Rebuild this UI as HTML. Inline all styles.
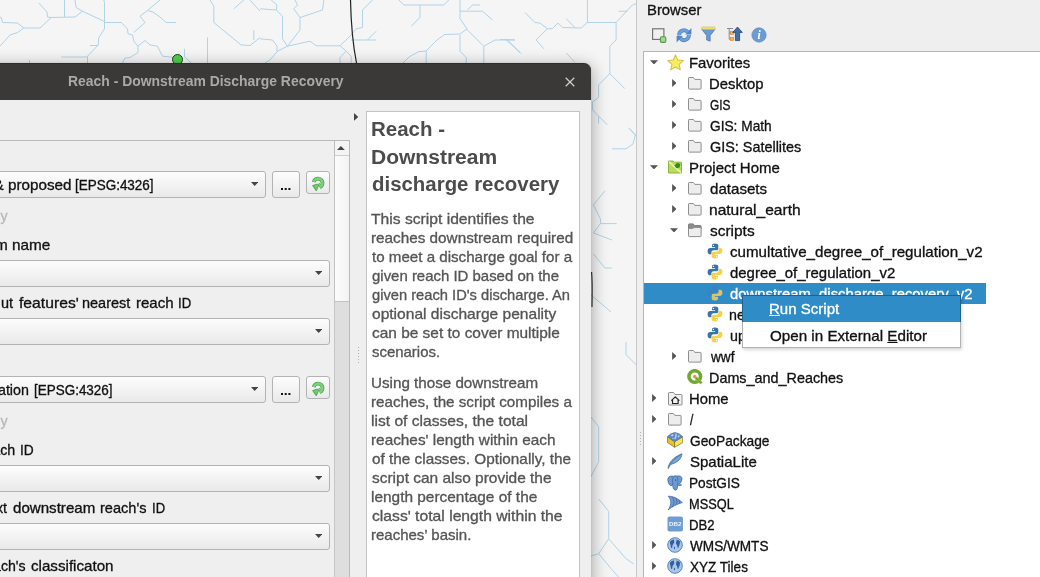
<!DOCTYPE html>
<html><head><meta charset="utf-8"><title>QGIS</title>
<style>
*{box-sizing:border-box}
html,body{margin:0;padding:0}
body{width:1040px;height:577px;overflow:hidden;position:relative;background:#f5f5f5;font-family:"Liberation Sans",sans-serif}
.layer{position:absolute;left:0;top:0;width:1040px;height:577px;overflow:hidden;will-change:transform}
.t{position:absolute;white-space:pre;line-height:20px;display:inline-block;-webkit-text-stroke:0.32px currentColor}
.abs{position:absolute}
/* dialog */
#dlg{position:absolute;left:-20px;top:63px;width:611px;height:540px;background:#efefef;border-radius:0 7px 0 0;box-shadow:0 4px 16px 2px rgba(0,0,0,.30),0 0 2px rgba(0,0,0,.14)}
#tbar{position:absolute;left:0;top:0;width:611px;height:36.5px;background:#3b3938;border-radius:0 7px 0 0;border-top:1px solid #2e2d2c}
.combo{position:absolute;height:27px;border:1px solid #b3b3b3;border-radius:3px;background:linear-gradient(#fdfdfd,#f3f3f3 50%,#e9e9e9)}
.combo svg{position:absolute;right:6.7px;top:10.2px}
.btn{position:absolute;border:1px solid #b3b3b3;border-radius:3px;background:linear-gradient(#fdfdfd,#f3f3f3 50%,#e9e9e9)}
/* browser */
#brp{position:absolute;left:636px;top:0;width:404px;height:577px;background:#efefef;border-left:1px solid #c9c9c9}
#tree{position:absolute;left:643px;top:51px;width:420px;height:540px;background:#fff;border:1px solid #b5b5b5}
#sel{position:absolute;left:644px;top:283px;width:342px;height:21px;background:#308cc6}
#menu{position:absolute;left:742px;top:295px;width:219px;height:53px;background:#fff;box-shadow:1px 2px 3px rgba(0,0,0,.16)}
#menu:after{content:"";position:absolute;left:0;top:0;right:0;bottom:0;border:1px solid rgba(0,0,0,.3)}
#menu .hi{position:absolute;left:0;top:0;width:219px;height:26.5px;background:#308cc6}
</style></head>
<body>
<!-- MAP -->
<svg class="abs" style="left:0;top:0" width="640" height="577" viewBox="0 0 640 577" fill="none" stroke="#b0d3e8" stroke-width="1">
<polyline points="38.8,3.0 47.0,12.0 47.5,17.0 51.2,17.5 75.0,17.0 82.5,11.2 76.2,7.5 75.0,0.0"/>
<polyline points="64.5,0.0 64.5,17.0"/>
<polyline points="82.5,11.2 103.8,21.2"/>
<polyline points="103.8,0.0 104.5,2.5 104.5,28.8 98.8,37.5 98.2,45.0 87.5,56.2 87.5,63.0"/>
<polyline points="61.2,57.0 87.5,57.0"/>
<polyline points="90.0,45.5 98.2,45.5"/>
<polyline points="0.0,46.2 10.0,35.0 17.5,32.5 23.8,28.0 40.0,28.0 51.2,17.5"/>
<polyline points="0.0,17.0 1.2,17.5 2.5,22.5 17.5,23.0 23.8,28.0"/>
<polyline points="104.5,22.5 121.2,22.5 127.5,28.8 128.0,33.8 132.5,35.0 133.8,41.2 138.0,46.2 138.0,52.5 130.0,57.5 125.0,58.0 122.5,63.0"/>
<polyline points="133.8,32.5 145.0,22.5 140.0,16.2 147.5,10.5 160.0,0.0"/>
<polyline points="147.5,10.5 153.0,12.0 160.0,17.0 166.2,22.5 176.2,22.5"/>
<polyline points="138.0,46.2 145.0,40.5 150.0,45.0 157.5,46.2 162.5,56.2 175.0,57.5"/>
<polyline points="184.5,48.8 184.5,57.0 191.2,63.0"/>
<polyline points="207.5,37.5 207.5,63.0"/>
<polyline points="210.0,0.0 213.8,6.2 213.8,22.5 241.2,45.0 250.0,45.5 260.0,37.5"/>
<polyline points="253.8,30.0 253.8,40.0"/>
<polyline points="233.8,8.8 243.8,0.0"/>
<polyline points="250.0,0.0 260.0,11.2"/>
<polyline points="29.5,60.0 29.5,63.0"/>
<polyline points="260.0,8.8 276.2,10.0 277.0,5.0 271.2,0.0"/>
<polyline points="276.2,10.0 282.5,16.2 282.5,38.8 287.5,46.2 277.5,51.2 270.0,60.0 265.0,63.0"/>
<polyline points="260.0,38.8 272.5,40.0 277.0,46.2 277.0,51.2"/>
<polyline points="287.5,46.2 300.0,30.0 300.0,17.5 293.8,8.8 297.5,5.0 295.0,0.0"/>
<polyline points="300.0,17.5 322.5,10.0 323.8,0.0"/>
<polyline points="287.5,46.2 310.0,41.2 316.2,45.8 340.0,45.8 351.2,35.0 356.2,28.8 362.5,27.5 362.5,10.0 372.5,0.0"/>
<polyline points="340.0,45.8 346.2,51.2 351.2,56.2 351.2,63.0"/>
<polyline points="346.2,51.2 340.0,57.5 340.0,63.0"/>
<polyline points="351.2,40.0 376.2,40.0"/>
<polyline points="367.5,40.0 376.2,31.2"/>
<polyline points="398.8,0.0 403.8,5.0 443.8,5.0 448.8,0.0"/>
<polyline points="420.0,5.0 420.0,17.5 411.2,26.2"/>
<polyline points="460.0,0.0 460.0,18.5 467.0,29.0 460.0,34.0 444.6,34.5 437.0,40.0 426.0,51.0 418.5,51.7 409.0,57.0 403.0,63.0"/>
<polyline points="426.2,51.2 426.2,63.0"/>
<polyline points="460.0,35.0 460.0,51.2 466.2,57.5 466.2,63.0"/>
<polyline points="460.0,11.2 482.5,11.2 492.5,20.0"/>
<polyline points="467.5,10.0 472.5,5.0 480.0,5.0"/>
<polyline points="466.2,28.8 483.8,46.2 483.8,63.0"/>
<polyline points="483.8,46.2 495.0,40.0 515.0,40.0"/>
<polyline points="506.2,40.0 520.0,52.5"/>
<polyline points="587.4,0.0 587.4,22.5 616.1,22.5 616.1,39.9 609.8,46.2 609.8,73.6 598.6,84.9 598.6,97.4 592.4,102.3 592.4,109.8 598.6,116.1 598.6,123.6"/>
<polyline points="616.1,22.5 632.3,5.0 636.0,3.7"/>
<polyline points="618.6,11.2 627.3,11.2"/>
<polyline points="525.0,12.5 534.9,22.5 539.9,23.0 547.4,28.7 552.4,28.7 557.9,23.0 562.4,27.5 581.1,28.0 587.4,22.5"/>
<polyline points="566.2,18.7 574.9,27.5"/>
<polyline points="547.4,28.7 536.2,39.9 543.7,48.7"/>
<polyline points="500.0,39.4 515.0,39.9"/>
<polyline points="507.5,39.9 521.2,53.7"/>
<polyline points="566.2,52.9 574.9,62.4"/>
<polyline points="609.8,73.6 624.8,88.6"/>
<polyline points="598.6,116.1 607.3,124.8"/>
<polyline points="629.8,128.6 636.0,136.0"/>
<polyline points="628.4,127.8 635.4,134.8 633.0,144.0 626.0,148.8 612.0,148.8"/>
<polyline points="605.0,190.8 593.4,204.9 600.4,218.9 600.4,223.6 616.7,223.6"/>
<polyline points="600.4,223.6 593.4,233.0 612.0,240.0"/>
<polyline points="593.4,253.9 605.0,268.0 612.0,268.0"/>
<polyline points="591.0,295.0 611.0,312.0"/>
<polyline points="626.0,342.0 626.0,354.7 636.0,364.6"/>
<polyline points="591.0,417.0 598.7,426.8 598.7,461.6 591.0,476.6"/>
<polyline points="598.7,499.0 608.7,511.4 608.7,538.8 598.7,553.7 591.0,556.0"/>
<polyline points="608.7,538.8 626.0,558.7 633.5,563.7"/>
<polyline points="598.7,553.7 611.0,568.6 618.6,577.0"/>
<path d="M350.5 0 C351 25 352 40 356.5 63" stroke="#222" stroke-width="1.2"/>
<path d="M591.6 272 C592.6 284 592 296 592 307" stroke="#222" stroke-width="1.1"/>

</svg>
<div class="abs" style="left:171.5px;top:54px;width:11px;height:11px;border-radius:50%;background:#4fd04a;border:1px solid #1f3f1f"></div>

<!-- DIALOG -->
<div id="dlg"><div id="tbar"></div></div>
<div class="layer" id="dlglayer">
  <!-- close x -->
  <svg class="abs" style="left:564px;top:76px" width="12" height="12" viewBox="0 0 12 12"><path d="M1.7 1.7 L10.3 10.3 M10.3 1.7 L1.7 10.3" stroke="#cdcdcd" stroke-width="1.25" fill="none"/></svg>
  <!-- scroll area frame -->
  <div class="abs" style="left:-5px;top:140px;width:355px;height:460px;border:1px solid #b9b9b9;background:#efefef"></div>
  <!-- scrollbar -->
  <div class="abs" style="left:334px;top:141px;width:15px;height:440px;background:#dedede;border-left:1px solid #c6c6c6"></div>
  <div class="abs" style="left:334px;top:141px;width:15px;height:15px;background:#f4f4f4;border-left:1px solid #bdbdbd;border-bottom:1px solid #cdcdcd"></div>
  <svg class="abs" style="left:337.3px;top:146.2px" width="7.8" height="4"><path d="M0 4 L3.9 0 L7.8 4 Z" fill="#444"/></svg>
  <div class="abs" style="left:334px;top:156px;width:15px;height:146px;background:linear-gradient(90deg,#fcfcfc,#f3f3f3);border:1px solid #c2c2c2;border-right:none;border-top:none"></div>
  <!-- widgets -->
  <div class="combo" style="left:-10px;top:171px;width:276px"><svg width="7.4" height="4"><path d="M0 0 H7.4 L3.7 4 Z" fill="#444"/></svg></div>
  <div class="btn" style="left:272px;top:171px;width:28px;height:27px"></div>
  <div class="abs" style="left:281.3px;top:187.6px;width:2px;height:2px;background:#111;box-shadow:3.7px 0 0 #111,7.4px 0 0 #111"></div>
  <div class="btn" style="left:306px;top:171px;width:24px;height:23px"></div>
  <svg class="abs gi" style="left:310px;top:175px" width="16" height="16" viewBox="0 0 16 16"><use href="#refresh"/></svg>
  <div class="combo" style="left:-10px;top:260px;width:340px"><svg width="7.4" height="4"><path d="M0 0 H7.4 L3.7 4 Z" fill="#444"/></svg></div>
  <div class="combo" style="left:-10px;top:318px;width:340px"><svg width="7.4" height="4"><path d="M0 0 H7.4 L3.7 4 Z" fill="#444"/></svg></div>
  <div class="combo" style="left:-10px;top:376px;width:276px"><svg width="7.4" height="4"><path d="M0 0 H7.4 L3.7 4 Z" fill="#444"/></svg></div>
  <div class="btn" style="left:272px;top:376px;width:28px;height:27px"></div>
  <div class="abs" style="left:281.3px;top:392.6px;width:2px;height:2px;background:#111;box-shadow:3.7px 0 0 #111,7.4px 0 0 #111"></div>
  <div class="btn" style="left:306px;top:376px;width:24px;height:23px"></div>
  <svg class="abs gi" style="left:310px;top:380px" width="16" height="16" viewBox="0 0 16 16"><use href="#refresh"/></svg>
  <div class="combo" style="left:-10px;top:465px;width:340px"><svg width="7.4" height="4"><path d="M0 0 H7.4 L3.7 4 Z" fill="#444"/></svg></div>
  <div class="combo" style="left:-10px;top:523px;width:340px"><svg width="7.4" height="4"><path d="M0 0 H7.4 L3.7 4 Z" fill="#444"/></svg></div>
  <!-- splitter -->
  <svg class="abs" style="left:354px;top:113.3px" width="4.4" height="7.8"><path d="M0 0 L4.3 3.9 L0 7.8 Z" fill="#444"/></svg>
  <div class="abs" style="left:357.5px;top:347px;width:1px;height:18px;background:repeating-linear-gradient(#b0b0b0 0 1px,transparent 1px 3px)"></div>
  <!-- help -->
  <div class="abs" style="left:366px;top:111px;width:214px;height:480px;background:#fff;border:1px solid #c3c3c3"></div>
<span class="t" style="left:67.60px;transform-origin:0 0;top:73px;line-height:16px;font-size:14.6px;font-weight:700;color:#a9a9a9;transform:scaleX(0.9543);-webkit-text-stroke:0">Reach - Downstream Discharge Recovery</span>
<span class="t" style="right:968.95px;transform-origin:100% 0;top:176px;line-height:17px;font-size:15px;font-weight:400;color:#111;transform:scaleX(1.0160)">ts &amp; proposed</span>
<span class="t" style="left:75.36px;transform-origin:0 0;top:177px;line-height:16px;font-size:14.4px;font-weight:400;color:#111;transform:scaleX(0.9354)">[EPSG:4326]</span>
<span class="t" style="right:1032.17px;transform-origin:100% 0;top:207px;line-height:17px;font-size:15px;font-weight:400;color:#b8b8b8;transform:scaleX(0.9500)">only</span>
<span class="t" style="right:989.65px;transform-origin:100% 0;top:236px;line-height:17px;font-size:15px;font-weight:400;color:#111;transform:scaleX(1.0227)">Dam name</span>
<span class="t" style="left:1.00px;transform-origin:0 0;top:294px;line-height:17px;font-size:15px;font-weight:400;color:#111;transform:scaleX(0.9669)">ut</span>
<span class="t" style="left:19.40px;transform-origin:0 0;top:294px;line-height:17px;font-size:15px;font-weight:400;color:#111;transform:scaleX(1.0472)">features'</span>
<span class="t" style="left:81.84px;transform-origin:0 0;top:294px;line-height:17px;font-size:15px;font-weight:400;color:#111;transform:scaleX(0.9646)">nearest</span>
<span class="t" style="left:135.60px;transform-origin:0 0;top:294px;line-height:17px;font-size:15px;font-weight:400;color:#111;transform:scaleX(1.0006)">reach</span>
<span class="t" style="left:177.98px;transform-origin:0 0;top:295px;line-height:16px;font-size:14.4px;font-weight:400;color:#111;transform:scaleX(0.9155)">ID</span>
<span class="t" style="right:1010.67px;transform-origin:100% 0;top:381px;line-height:17px;font-size:15px;font-weight:400;color:#111;transform:scaleX(0.9500)">regulation</span>
<span class="t" style="left:33.86px;transform-origin:0 0;top:382px;line-height:16px;font-size:14.4px;font-weight:400;color:#111;transform:scaleX(0.9354)">[EPSG:4326]</span>
<span class="t" style="right:1032.17px;transform-origin:100% 0;top:412px;line-height:17px;font-size:15px;font-weight:400;color:#b8b8b8;transform:scaleX(0.9500)">only</span>
<span class="t" style="right:1024.38px;transform-origin:100% 0;top:441px;line-height:17px;font-size:15px;font-weight:400;color:#111;transform:scaleX(0.9484)">ach</span>
<span class="t" style="left:20.15px;transform-origin:0 0;top:442px;line-height:16px;font-size:14.4px;font-weight:400;color:#111;transform:scaleX(0.9540)">ID</span>
<span class="t" style="right:1032.99px;transform-origin:100% 0;top:499px;line-height:17px;font-size:15px;font-weight:400;color:#111;transform:scaleX(0.9500)">ext</span>
<span class="t" style="left:13.00px;transform-origin:0 0;top:499px;line-height:17px;font-size:15px;font-weight:400;color:#111;transform:scaleX(1.0073)">downstream</span>
<span class="t" style="left:100.23px;transform-origin:0 0;top:499px;line-height:17px;font-size:15px;font-weight:400;color:#111;transform:scaleX(0.9701)">reach's</span>
<span class="t" style="left:151.69px;transform-origin:0 0;top:500px;line-height:16px;font-size:14.4px;font-weight:400;color:#111;transform:scaleX(0.9078)">ID</span>
<span class="t" style="right:1014.43px;transform-origin:100% 0;top:557px;line-height:17px;font-size:15px;font-weight:400;color:#111;transform:scaleX(0.9414)">ach's</span>
<span class="t" style="left:31.10px;transform-origin:0 0;top:557px;line-height:17px;font-size:15px;font-weight:400;color:#111;transform:scaleX(1.0103)">classificaton</span>
<span class="t" style="left:370.75px;transform-origin:0 0;top:118px;line-height:22px;font-size:19.6px;font-weight:700;color:#4c4c4c;transform:scaleX(1.0454);-webkit-text-stroke:0">Reach -</span>
<span class="t" style="left:370.73px;transform-origin:0 0;top:146px;line-height:22px;font-size:19.6px;font-weight:700;color:#4c4c4c;transform:scaleX(1.0726);-webkit-text-stroke:0">Downstream</span>
<span class="t" style="left:371.80px;transform-origin:0 0;top:173px;line-height:22px;font-size:19.6px;font-weight:700;color:#4c4c4c;transform:scaleX(1.0422);-webkit-text-stroke:0">discharge recovery</span>
<span class="t" style="left:371.10px;transform-origin:0 0;top:210px;line-height:17px;font-size:15px;font-weight:400;color:#555;transform:scaleX(1.0436)">This script identifies the</span>
<span class="t" style="left:370.78px;transform-origin:0 0;top:229px;line-height:17px;font-size:15px;font-weight:400;color:#555;transform:scaleX(1.0188)">reaches downstream required</span>
<span class="t" style="left:371.80px;transform-origin:0 0;top:248px;line-height:17px;font-size:15px;font-weight:400;color:#555;transform:scaleX(1.0085)">to meet a discharge goal for a</span>
<span class="t" style="left:371.80px;transform-origin:0 0;top:267px;line-height:17px;font-size:15px;font-weight:400;color:#555;transform:scaleX(0.9964)">given reach ID based on the</span>
<span class="t" style="left:371.80px;transform-origin:0 0;top:286px;line-height:17px;font-size:15px;font-weight:400;color:#555;transform:scaleX(0.9796)">given reach ID's discharge. An</span>
<span class="t" style="left:371.80px;transform-origin:0 0;top:305px;line-height:17px;font-size:15px;font-weight:400;color:#555;transform:scaleX(1.0369)">optional discharge penality</span>
<span class="t" style="left:371.80px;transform-origin:0 0;top:324px;line-height:17px;font-size:15px;font-weight:400;color:#555;transform:scaleX(1.0288)">can be set to cover multiple</span>
<span class="t" style="left:371.80px;transform-origin:0 0;top:343px;line-height:17px;font-size:15px;font-weight:400;color:#555;transform:scaleX(0.9956)">scenarios.</span>
<span class="t" style="left:370.89px;transform-origin:0 0;top:374px;line-height:17px;font-size:15px;font-weight:400;color:#555;transform:scaleX(1.0123)">Using those downstream</span>
<span class="t" style="left:370.89px;transform-origin:0 0;top:393px;line-height:17px;font-size:15px;font-weight:400;color:#555;transform:scaleX(1.0122)">reaches, the script compiles a</span>
<span class="t" style="left:370.86px;transform-origin:0 0;top:412px;line-height:17px;font-size:15px;font-weight:400;color:#555;transform:scaleX(1.0410)">list of classes, the total</span>
<span class="t" style="left:370.88px;transform-origin:0 0;top:431px;line-height:17px;font-size:15px;font-weight:400;color:#555;transform:scaleX(1.0227)">reaches' length within each</span>
<span class="t" style="left:371.90px;transform-origin:0 0;top:450px;line-height:17px;font-size:15px;font-weight:400;color:#555;transform:scaleX(1.0217)">of the classes. Optionally, the</span>
<span class="t" style="left:371.90px;transform-origin:0 0;top:469px;line-height:17px;font-size:15px;font-weight:400;color:#555;transform:scaleX(1.0304)">script can also provide the</span>
<span class="t" style="left:370.87px;transform-origin:0 0;top:488px;line-height:17px;font-size:15px;font-weight:400;color:#555;transform:scaleX(1.0277)">length percentage of the</span>
<span class="t" style="left:371.90px;transform-origin:0 0;top:507px;line-height:17px;font-size:15px;font-weight:400;color:#555;transform:scaleX(1.0463)">class' total length within the</span>
<span class="t" style="left:370.90px;transform-origin:0 0;top:526px;line-height:17px;font-size:15px;font-weight:400;color:#555;transform:scaleX(0.9998)">reaches’ basin.</span>

</div>

<!-- BROWSER PANEL -->
<div id="brp"></div>
<div class="abs" style="left:639.5px;top:432px;width:1px;height:14px;background:repeating-linear-gradient(#b0b0b0 0 1px,transparent 1px 3px)"></div>
<div id="tree"></div>
<div id="sel"></div>
<div class="layer" id="brlayer">

<svg class="abs" style="left:650px;top:26px" width="18" height="18" viewBox="0 0 18 18"><rect x="2.6" y="2.8" width="11.3" height="10.6" fill="none" stroke="#6b6b6b" stroke-width="1.1"/><rect x="10.4" y="10.8" width="5.4" height="5.6" rx="1.4" fill="#a3d694" stroke="#56964a" stroke-width="1.1"/></svg>
<svg class="abs" style="left:676px;top:26.6px" width="16" height="16.4" viewBox="0 0 16 16.4"><path d="M3.10 8.37 A4.9 4.9 0 0 1 11.75 5.05" fill="none" stroke="#4f86c6" stroke-width="3.9"/><path d="M12.90 8.03 A4.9 4.9 0 0 1 4.25 11.35" fill="none" stroke="#4f86c6" stroke-width="3.9"/><path d="M9.2 7.4 L15.4 7.4 L15.4 1 Z" fill="#4f86c6"/><path d="M6.8 9 L0.6 9 L0.6 15.4 Z" fill="#4f86c6"/><path d="M3.10 8.37 A4.9 4.9 0 0 1 11.75 5.05" fill="none" stroke="#6fa2dc" stroke-width="2.2"/><path d="M12.90 8.03 A4.9 4.9 0 0 1 4.25 11.35" fill="none" stroke="#6fa2dc" stroke-width="2.2"/></svg>
<svg class="abs" style="left:701.3px;top:26.4px" width="14.8" height="16.2" viewBox="0 0 16 17" preserveAspectRatio="none"><path d="M0.8 3.4 H15.2 L9.9 10 V16 L6.1 14.6 V10 Z" fill="#6a9ad2" stroke="#4676ae" stroke-width=".8" stroke-linejoin="round"/><rect x="0.8" y="1" width="14.4" height="2.6" rx=".6" fill="#f3e36a" stroke="#cbb64a" stroke-width=".6"/></svg>
<svg class="abs" style="left:726px;top:26px" width="17" height="16" viewBox="0 0 17 16"><path d="M1 2.5 H7 M3.2 2.5 V13.2 M3.2 7 H5 M3.2 13.2 H5" stroke="#8a8a8a" stroke-width="1" fill="none"/><rect x="4.6" y="5.3" width="3" height="3" fill="#f6b55a" stroke="#d98a2a" stroke-width=".7"/><rect x="4.6" y="11.4" width="3" height="3" fill="#f6b55a" stroke="#d98a2a" stroke-width=".7"/><path d="M11.5 1 L16.3 6.4 H13.6 V14.6 H9.4 V6.4 H6.7 Z" fill="#3d6ea8" stroke="#27426a" stroke-width=".8" stroke-linejoin="round"/></svg>
<svg class="abs" style="left:751px;top:27px" width="16" height="16" viewBox="0 0 16 16"><circle cx="8" cy="8" r="7.2" fill="#6d9bd1" stroke="#5585bf" stroke-width=".6"/><text x="8.1" y="12.2" font-family="Liberation Serif, serif" font-size="11.5" font-style="italic" font-weight="700" fill="#fff" text-anchor="middle">i</text></svg>
<svg class="abs" style="left:650.3px;top:60.2px" width="8" height="4.3"><use href="#a-down"/></svg>
<svg class="abs" style="left:666.5px;top:53.6px" width="17" height="17"><use href="#i-star"/></svg>
<svg class="abs" style="left:672.2px;top:79.3px" width="4.3" height="8"><use href="#a-right"/></svg>
<svg class="abs" style="left:687.0px;top:76.0px" width="16" height="16"><use href="#i-folder"/></svg>
<svg class="abs" style="left:672.2px;top:100.3px" width="4.3" height="8"><use href="#a-right"/></svg>
<svg class="abs" style="left:687.0px;top:97.0px" width="16" height="16"><use href="#i-folder"/></svg>
<svg class="abs" style="left:672.2px;top:121.3px" width="4.3" height="8"><use href="#a-right"/></svg>
<svg class="abs" style="left:687.0px;top:118.0px" width="16" height="16"><use href="#i-folder"/></svg>
<svg class="abs" style="left:672.2px;top:142.3px" width="4.3" height="8"><use href="#a-right"/></svg>
<svg class="abs" style="left:687.0px;top:139.0px" width="16" height="16"><use href="#i-folder"/></svg>
<svg class="abs" style="left:672.2px;top:184.3px" width="4.3" height="8"><use href="#a-right"/></svg>
<svg class="abs" style="left:687.0px;top:181.0px" width="16" height="16"><use href="#i-folder"/></svg>
<svg class="abs" style="left:672.2px;top:205.3px" width="4.3" height="8"><use href="#a-right"/></svg>
<svg class="abs" style="left:687.0px;top:202.0px" width="16" height="16"><use href="#i-folder"/></svg>
<svg class="abs" style="left:672.2px;top:352.3px" width="4.3" height="8"><use href="#a-right"/></svg>
<svg class="abs" style="left:687.0px;top:349.0px" width="16" height="16"><use href="#i-folder"/></svg>
<svg class="abs" style="left:650.3px;top:165.2px" width="8" height="4.3"><use href="#a-down"/></svg>
<svg class="abs" style="left:667.0px;top:159.3px" width="16" height="16"><use href="#i-project"/></svg>
<svg class="abs" style="left:670.2px;top:228.2px" width="8" height="4.3"><use href="#a-down"/></svg>
<svg class="abs" style="left:687.0px;top:221.6px" width="16" height="16"><use href="#i-folder-open"/></svg>
<svg class="abs" style="left:706.6px;top:242.8px" width="16" height="16"><use href="#i-python"/></svg>
<svg class="abs" style="left:706.6px;top:263.8px" width="16" height="16"><use href="#i-python"/></svg>
<svg class="abs" style="left:706.6px;top:305.8px" width="16" height="16"><use href="#i-python"/></svg>
<svg class="abs" style="left:706.6px;top:326.8px" width="16" height="16"><use href="#i-python"/></svg>
<svg class="abs" style="left:706.6px;top:284.8px" width="16" height="16"><use href="#i-python-sel"/></svg>
<svg class="abs" style="left:687.2px;top:369.0px" width="16" height="16"><use href="#i-qgis"/></svg>
<svg class="abs" style="left:652.3px;top:394.3px" width="4.3" height="8"><use href="#a-right"/></svg>
<svg class="abs" style="left:667.0px;top:390.5px" width="16" height="16"><use href="#i-home"/></svg>
<svg class="abs" style="left:652.3px;top:415.3px" width="4.3" height="8"><use href="#a-right"/></svg>
<svg class="abs" style="left:667.0px;top:412.0px" width="16" height="16"><use href="#i-folder"/></svg>
<svg class="abs" style="left:667.0px;top:432.0px" width="16" height="16"><use href="#i-gpkg"/></svg>
<svg class="abs" style="left:652.3px;top:457.3px" width="4.3" height="8"><use href="#a-right"/></svg>
<svg class="abs" style="left:667.0px;top:452.5px" width="16" height="16"><use href="#i-spatialite"/></svg>
<svg class="abs" style="left:667.0px;top:474.5px" width="16" height="16"><use href="#i-postgis"/></svg>
<svg class="abs" style="left:667.0px;top:494.5px" width="16" height="16"><use href="#i-mssql"/></svg>
<svg class="abs" style="left:667.0px;top:515.8px" width="16" height="16"><use href="#i-db2"/></svg>
<svg class="abs" style="left:652.3px;top:541.3px" width="4.3" height="8"><use href="#a-right"/></svg>
<svg class="abs" style="left:667.0px;top:537.0px" width="16" height="16"><use href="#i-globe"/></svg>
<svg class="abs" style="left:652.3px;top:562.3px" width="4.3" height="8"><use href="#a-right"/></svg>
<svg class="abs" style="left:667.0px;top:558.0px" width="16" height="16"><use href="#i-globe"/></svg>

<span class="t" style="left:646.91px;transform-origin:0 0;top:1px;line-height:17px;font-size:15px;font-weight:400;color:#111;transform:scaleX(0.9904)">Browser</span>
<span class="t" style="left:688.81px;transform-origin:0 0;top:54px;line-height:17px;font-size:15px;font-weight:400;color:#111;transform:scaleX(0.9919)">Favorites</span>
<span class="t" style="left:709.21px;transform-origin:0 0;top:75px;line-height:17px;font-size:15px;font-weight:400;color:#111;transform:scaleX(0.9891)">Desktop</span>
<span class="t" style="left:710.20px;transform-origin:0 0;top:97px;line-height:16px;font-size:14.4px;font-weight:400;color:#111;transform:scaleX(0.8267)">GIS</span>
<span class="t" style="left:710.20px;transform-origin:0 0;top:117px;line-height:17px;font-size:15px;font-weight:400;color:#111;transform:scaleX(0.9140)">GIS: Math</span>
<span class="t" style="left:710.20px;transform-origin:0 0;top:138px;line-height:17px;font-size:15px;font-weight:400;color:#111;transform:scaleX(0.9604)">GIS: Satellites</span>
<span class="t" style="left:688.80px;transform-origin:0 0;top:159px;line-height:17px;font-size:15px;font-weight:400;color:#111;transform:scaleX(0.9998)">Project Home</span>
<span class="t" style="left:710.20px;transform-origin:0 0;top:180px;line-height:17px;font-size:15px;font-weight:400;color:#111;transform:scaleX(1.0070)">datasets</span>
<span class="t" style="left:709.16px;transform-origin:0 0;top:201px;line-height:17px;font-size:15px;font-weight:400;color:#111;transform:scaleX(1.0361)">natural_earth</span>
<span class="t" style="left:709.60px;transform-origin:0 0;top:222px;line-height:17px;font-size:15px;font-weight:400;color:#111;transform:scaleX(1.0295)">scripts</span>
<span class="t" style="left:729.80px;transform-origin:0 0;top:243px;line-height:17px;font-size:15px;font-weight:400;color:#111;transform:scaleX(1.0095)">cumultative_degree_of_regulation_v2</span>
<span class="t" style="left:729.80px;transform-origin:0 0;top:264px;line-height:17px;font-size:15px;font-weight:400;color:#111;transform:scaleX(0.9956)">degree_of_regulation_v2</span>
<span class="t" style="left:729.80px;transform-origin:0 0;top:285px;line-height:17px;font-size:15px;font-weight:400;color:#fff;transform:scaleX(0.9894)">downstream_discharge_recovery_v2</span>
<span class="t" style="left:728.85px;transform-origin:0 0;top:306px;line-height:17px;font-size:15px;font-weight:400;color:#111;transform:scaleX(0.9500)">nearest_reach</span>
<span class="t" style="left:729.80px;transform-origin:0 0;top:327px;line-height:17px;font-size:15px;font-weight:400;color:#111;transform:scaleX(0.9500)">upstream</span>
<span class="t" style="left:711.11px;transform-origin:0 0;top:348px;line-height:17px;font-size:15px;font-weight:400;color:#111;transform:scaleX(0.9109)">wwf</span>
<span class="t" style="left:709.24px;transform-origin:0 0;top:369px;line-height:17px;font-size:15px;font-weight:400;color:#111;transform:scaleX(0.9583)">Dams_and_Reaches</span>
<span class="t" style="left:688.81px;transform-origin:0 0;top:390px;line-height:17px;font-size:15px;font-weight:400;color:#111;transform:scaleX(0.9878)">Home</span>
<span class="t" style="left:690.00px;transform-origin:0 0;top:411px;line-height:17px;font-size:15px;font-weight:400;color:#111;transform:scaleX(0.8000)">/</span>
<span class="t" style="left:689.80px;transform-origin:0 0;top:432px;line-height:17px;font-size:15px;font-weight:400;color:#111;transform:scaleX(0.9168)">GeoPackage</span>
<span class="t" style="left:689.80px;transform-origin:0 0;top:453px;line-height:17px;font-size:15px;font-weight:400;color:#111;transform:scaleX(1.0004)">SpatiaLite</span>
<span class="t" style="left:688.89px;transform-origin:0 0;top:474px;line-height:17px;font-size:15px;font-weight:400;color:#111;transform:scaleX(0.9116)">PostGIS</span>
<span class="t" style="left:688.91px;transform-origin:0 0;top:496px;line-height:16px;font-size:14.4px;font-weight:400;color:#111;transform:scaleX(0.8891)">MSSQL</span>
<span class="t" style="left:688.88px;transform-origin:0 0;top:517px;line-height:16px;font-size:14.4px;font-weight:400;color:#111;transform:scaleX(0.9151)">DB2</span>
<span class="t" style="left:689.80px;transform-origin:0 0;top:538px;line-height:16px;font-size:14.4px;font-weight:400;color:#111;transform:scaleX(0.9439)">WMS/WMTS</span>
<span class="t" style="left:689.80px;transform-origin:0 0;top:558px;line-height:17px;font-size:15px;font-weight:400;color:#111;transform:scaleX(0.9022)">XYZ Tiles</span>

</div>
<div id="menu"><div class="hi"></div></div>
<div class="layer">
<span class="t" style="left:769.00px;transform-origin:0 0;top:300px;line-height:17px;font-size:15px;font-weight:400;color:#fff;transform:scaleX(1.0020)"><u>R</u>un Script</span>
<span class="t" style="left:770.00px;transform-origin:0 0;top:327px;line-height:17px;font-size:15px;font-weight:400;color:#111;transform:scaleX(1.0123)">Open in External <u>E</u>ditor</span>

</div>
<svg width="0" height="0" style="position:absolute">
<defs>
<g id="refresh"><path d="M3.80 7.09 A4.4 4.4 0 1 1 9.60 12.13" fill="none" stroke="#46a046" stroke-width="3.7"/><path d="M2.6 10.6 L9.6 8.3 L6.3 15.9 Z" fill="#5fbf5f" stroke="#46a046" stroke-width=".8" stroke-linejoin="round"/><path d="M3.80 7.09 A4.4 4.4 0 1 1 9.60 12.13" fill="none" stroke="#7ed27e" stroke-width="2.5"/><path d="M4.2 10.7 L8.6 9.3 L6.4 14.2 Z" fill="#74cc74"/><path d="M7.2 7.6 L9.4 7.9 L7.6 9.3 Z" fill="#f4fbf4"/></g>

<symbol id="i-folder" viewBox="0 0 16 16"><path d="M1.5 2.2 Q1.5 1.5 2.2 1.5 H6 Q6.7 1.5 7.1 2.2 L7.8 3.4 H13.4 Q14.1 3.4 14.1 4.1 V12.4 Q14.1 13.1 13.4 13.1 H2.2 Q1.5 13.1 1.5 12.4 Z" fill="#ededed" stroke="#8e8e8e" stroke-width="1"/></symbol>
<symbol id="i-folder-open" viewBox="0 0 16 16"><path d="M1.5 2.6 Q1.5 1.9 2.2 1.9 H6.2 L7.6 3.6 H13.4 Q14.1 3.6 14.1 4.3 V7 H1.5 Z" fill="#8c8c8c" stroke="#7d7d7d" stroke-width="1"/><path d="M1.5 6.4 H5.8 L7 5.5 H14.1 V13.9 Q14.1 14.6 13.4 14.6 H2.2 Q1.5 14.6 1.5 13.9 Z" fill="#ededed" stroke="#8e8e8e" stroke-width="1"/></symbol>
<symbol id="i-star" viewBox="0 0 16 16"><path d="M8 0.9 L10.1 5.7 L15.3 6.2 L11.4 9.7 L12.5 14.9 L8 12.2 L3.5 14.9 L4.6 9.7 L0.7 6.2 L5.9 5.7 Z" fill="#f7ee5e" stroke="#d9bd4a" stroke-width="1" stroke-linejoin="round"/></symbol>
<symbol id="i-project" viewBox="0 0 16 16"><path d="M1.5 2 H6 L7.2 3.2 H14.5 V14 H1.5 Z" fill="#b9dc5c" stroke="#8db341" stroke-width="1"/><path d="M2 2.8 L14 13.6" stroke="#e4f3b0" stroke-width="1.6"/><path d="M10.3 3.8 L13.4 5 L12.6 8.6 L9.4 9.2 L7.4 6.4 Z" fill="#2c8f1c"/></symbol>
<symbol id="i-python" viewBox="0 0 16 16"><path d="M7.8 0.6 C5.3 0.6 5 1.7 5 2.6 V4.3 H8.1 V5 H3.2 C1.6 5 0.6 6.2 0.6 8.2 C0.6 10.2 1.5 11.3 3 11.3 H4.4 V9.4 C4.4 8 5.5 7.2 6.7 7.2 H9.6 C10.6 7.2 11.3 6.4 11.3 5.4 V2.6 C11.3 1.4 10.2 0.6 7.8 0.6 Z" fill="#3774a7"/><circle cx="6.4" cy="2.4" r="0.7" fill="#fff"/><path d="M8.2 15.4 C10.7 15.4 11 14.3 11 13.4 V11.7 H7.9 V11 H12.8 C14.4 11 15.4 9.8 15.4 7.8 C15.4 5.8 14.5 4.7 13 4.7 H11.6 V6.6 C11.6 8 10.5 8.8 9.3 8.8 H6.4 C5.4 8.8 4.7 9.6 4.7 10.6 V13.4 C4.7 14.6 5.8 15.4 8.2 15.4 Z" fill="#f8d04a"/><circle cx="9.6" cy="13.6" r="0.7" fill="#fff"/></symbol>
<symbol id="i-python-sel" viewBox="0 0 16 16"><path d="M7.8 0.6 C5.3 0.6 5 1.7 5 2.6 V4.3 H8.1 V5 H3.2 C1.6 5 0.6 6.2 0.6 8.2 C0.6 10.2 1.5 11.3 3 11.3 H4.4 V9.4 C4.4 8 5.5 7.2 6.7 7.2 H9.6 C10.6 7.2 11.3 6.4 11.3 5.4 V2.6 C11.3 1.4 10.2 0.6 7.8 0.6 Z" fill="#3a83be"/><path d="M8.2 15.4 C10.7 15.4 11 14.3 11 13.4 V11.7 H7.9 V11 H12.8 C14.4 11 15.4 9.8 15.4 7.8 C15.4 5.8 14.5 4.7 13 4.7 H11.6 V6.6 C11.6 8 10.5 8.8 9.3 8.8 H6.4 C5.4 8.8 4.7 9.6 4.7 10.6 V13.4 C4.7 14.6 5.8 15.4 8.2 15.4 Z" fill="#d9c46a"/></symbol>
<symbol id="i-qgis" viewBox="0 0 16 16"><circle cx="7.7" cy="7.5" r="5.8" fill="none" stroke="#73a62f" stroke-width="3.5"/><path d="M8.6 8.6 L14.6 14.4" stroke="#8cc04a" stroke-width="3" stroke-linecap="butt"/><path d="M8.6 8.6 L14.2 14" stroke="#5e9426" stroke-width="1"/><circle cx="7.7" cy="7.5" r="1.7" fill="#f0913a"/></symbol>
<symbol id="i-home" viewBox="0 0 16 16"><path d="M1.5 2.2 Q1.5 1.5 2.2 1.5 H6.2 Q6.9 1.5 7.3 2.2 L8 3.5 H14.3 Q15 3.5 15 4.2 V13.3 Q15 14 14.3 14 H2.2 Q1.5 14 1.5 13.3 Z" fill="#f1f1f1" stroke="#8e8e8e" stroke-width="1"/><path d="M4.3 9.6 L8.3 5.8 L12.3 9.6 M5.5 8.9 V12.5 H11.1 V8.9" fill="none" stroke="#222" stroke-width="1.15" stroke-linejoin="round"/></symbol>
<symbol id="i-gpkg" viewBox="0 0 16 16"><path d="M0.5 4.8 L7.6 9.7 V15.3 L0.5 10.6 Z" fill="#e6c327" stroke="#7d6c1c" stroke-width=".7" stroke-linejoin="round"/><path d="M7.6 9.7 L15.7 4.8 V10.6 L7.6 15.3 Z" fill="#f5e75c" stroke="#7d6c1c" stroke-width=".7" stroke-linejoin="round"/><path d="M0.5 4.8 Q3 1.2 8 0.4 Q13 1.2 15.7 4.8 L7.6 9.7 Z" fill="#5d88c2" stroke="#44699f" stroke-width=".5" stroke-linejoin="round"/><path d="M3.4 3.4 L5.6 2 L7 3 L5.4 4.6 Z M8.4 1.4 L9.8 1.4 L9.6 5 L8.2 7.6 L7 6.2 L8.2 4.4 Z M11 3.2 L12.8 3.6 L12 5.4 L10.6 5 Z M4.6 5.8 L6.4 6 L6.6 7.6 Z" fill="#b9cfea"/></symbol>
<symbol id="i-spatialite" viewBox="0 0 16 16"><path d="M1 15.2 C2 10 5.5 4.5 15 0.8 C14.6 5 11 9.6 4.2 11.2 C3 12.2 2 13.6 1.4 15.4 Z" fill="#79a4d6" stroke="#41699d" stroke-width=".8" stroke-linejoin="round"/><path d="M2.4 12.4 C5 8 9 4.6 14 1.6" stroke="#41699d" stroke-width=".6" fill="none"/></symbol>
<symbol id="i-postgis" viewBox="0 0 16 16"><path d="M3.6 1.2 C1.2 1.4 0.6 3.6 1 6 C1.4 8.6 2.6 10.6 4 10.6 C4.8 10.6 5.4 9.8 5.6 9.2 C5.8 11.8 6.2 14.6 8 15 C9.8 15.4 10.4 13.6 10.4 12.4 L10.6 10.2 C12 10.8 13.8 10.6 14.6 10 C13.6 9.8 12.8 9.6 12.6 9 C14.4 7 15.6 3.8 14.6 2.2 C13.6 0.8 11.4 0.6 10 1.2 C8.6 0.6 7.2 0.8 6.4 1.4 C5.6 1 4.6 1.1 3.6 1.2 Z" fill="#6c9bd2" stroke="#3d679e" stroke-width=".8" stroke-linejoin="round"/><path d="M6.4 1.6 C5.4 3.6 5.4 7 5.6 9.2 M10 1.4 C11.4 3.6 10.8 7 10.6 10" stroke="#3d679e" stroke-width=".7" fill="none"/><circle cx="8.6" cy="5.2" r=".6" fill="#23426e"/></symbol>
<symbol id="i-mssql" viewBox="0 0 16 16"><path d="M1.2 1.2 C6 1 11.4 3.6 15.4 7.6 C10.4 9 5 11.6 1 15 C4 11 5.2 5.4 1.2 1.2 Z" fill="#6c9bd2" stroke="#3d679e" stroke-width=".7" stroke-linejoin="round"/><path d="M5.4 2 C7.8 5.4 7.4 9.6 5 12 M8.8 3.2 C10.6 5.8 10.2 8.4 8.8 9.8 M11.8 5 C12.8 6.4 12.6 7.6 12.2 8.4" stroke="#41699d" stroke-width=".8" fill="none"/></symbol>
<symbol id="i-db2" viewBox="0 0 16 16"><rect x=".5" y=".5" width="15.4" height="15" rx="2" fill="#6d9dd3"/><text x="8.2" y="10" font-family="Liberation Sans, sans-serif" font-size="6.2" font-weight="700" fill="#eef4fb" text-anchor="middle">DB2</text></symbol>
<symbol id="i-globe" viewBox="0 0 16 16"><circle cx="8" cy="8" r="7.3" fill="#a9c7ea" stroke="#4878b4" stroke-width=".9"/><path d="M3.2 4.2 Q5 2.2 7.2 2.6 Q6.6 4 7.4 5.2 Q6.2 6.8 5.4 8.6 Q5.6 10.6 4.6 11.4 Q3.4 9.8 3.6 8 Q2.2 6.4 3.2 4.2 Z M9.4 2.4 Q12 2.6 13.6 5 Q12.4 5.4 12.8 7 Q12 9.2 11 11.4 Q10.2 9.6 10 8 Q8.6 7 9 5.2 Q10 3.8 9.4 2.4 Z M7.2 9.4 Q8.4 10.2 8 12 Q7.2 12.6 6.8 11.2 Z" fill="#33609c"/></symbol>
<symbol id="a-down" viewBox="0 0 8 4"><path d="M0 0 H8 L4 4.3 Z" fill="#555"/></symbol>
<symbol id="a-right" viewBox="0 0 4 8"><path d="M0 0 V8 L4.3 4 Z" fill="#555"/></symbol>
</defs>
</svg>
</body></html>
